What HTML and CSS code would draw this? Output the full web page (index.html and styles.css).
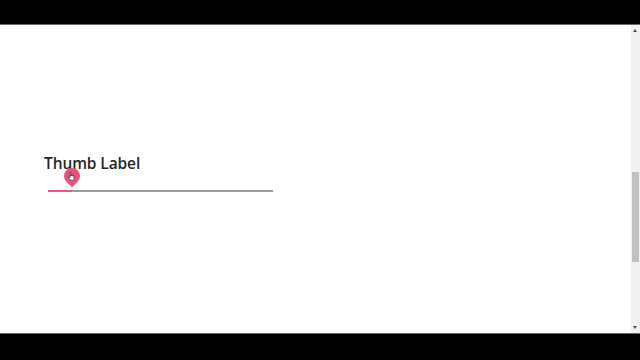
FILE: index.html
```html
<!DOCTYPE html>
<html>
<head>
<meta charset="utf-8">
<link rel="stylesheet" href="styles.css">
</head>
<body>
<div class="bar"></div>
<div class="frame">
  <main class="content">
    <h2 class="title">Thumb Label</h2>
    <div class="slider">
      <div class="track"><div class="fill" style="width:24px"></div></div>
      <div class="thumb" style="left:24px">
        <div class="pin"></div>
        <svg class="cursor" width="9" height="10" viewBox="0 0 9 10"><path d="M3 1.2c0-.6.9-.6.9 0V5l.1-1c0-.5.9-.5.9 0v1l.1-.7c0-.5.9-.5.9 0v.9l.1-.5c0-.5.9-.5.9 0v2.4C7.8 8.4 7 9.3 5.6 9.3H4.4c-.9 0-1.5-.5-2-1.2L1 6.1c-.3-.4.3-.9.7-.5L3 6.8z" fill="#fff" stroke="#333" stroke-width=".7"/></svg>
      </div>
    </div>
  </main>
  <div class="scrollbar">
    <div class="arrow up"></div>
    <div class="sb-track"><div class="sb-thumb"></div></div>
    <div class="arrow down"></div>
  </div>
</div>
<div class="bar"></div>
</body>
</html>
```
FILE: styles.css
```css
html, body { margin: 0; padding: 0; }
body {
  background: #000;
  width: 640px;
  height: 360px;
  overflow: hidden;
  font-family: "Open Sans", "Noto Sans", sans-serif;
}
.bar { height: 24px; background: #000; }
.bar:last-child { height: 26px; }
.frame {
  height: 308px;
  border-top: 1px solid #6a6a6a;
  border-bottom: 1px solid #6a6a6a;
  background: #fff;
  display: flex;
}
.content {
  flex: 1;
  padding: 127px 0 0 44px;
}
.title {
  margin: 0;
  font-size: 15.5px;
  font-weight: 600;
  line-height: 22px;
  letter-spacing: -0.1px;
  color: #262626;
}
.slider {
  position: relative;
  width: 225px;
  margin: 16px 0 0 4px;
  height: 2px;
}
.track {
  height: 2px;
  background: #9e9e9e;
}
.fill {
  height: 2px;
  background: #f0537f;
}
.thumb {
  position: absolute;
  top: 0;
  width: 0;
  height: 0;
}
.pin {
  position: absolute;
  left: -8px;
  top: -22px;
  width: 16px;
  height: 16px;
  background: #ee5080;
  border-radius: 50% 50% 0 50%;
  transform: rotate(45deg);
}
.cursor {
  position: absolute;
  left: -5px;
  top: -19px;
}
.scrollbar {
  width: 9px;
  background: #f1f1f1;
  display: flex;
  flex-direction: column;
}
.arrow { height: 10px; position: relative; }
.arrow::after {
  content: "";
  position: absolute;
  left: 2px;
  top: 4px;
  border-left: 2.5px solid transparent;
  border-right: 2.5px solid transparent;
}
.arrow.up::after { border-bottom: 3px solid #505050; }
.arrow.down::after { border-top: 3px solid #505050; top: 3px; }
.sb-track { flex: 1; padding-top: 137px; }
.sb-thumb {
  margin: 0 1px;
  height: 90px;
  background: #c1c1c1;
}
```
